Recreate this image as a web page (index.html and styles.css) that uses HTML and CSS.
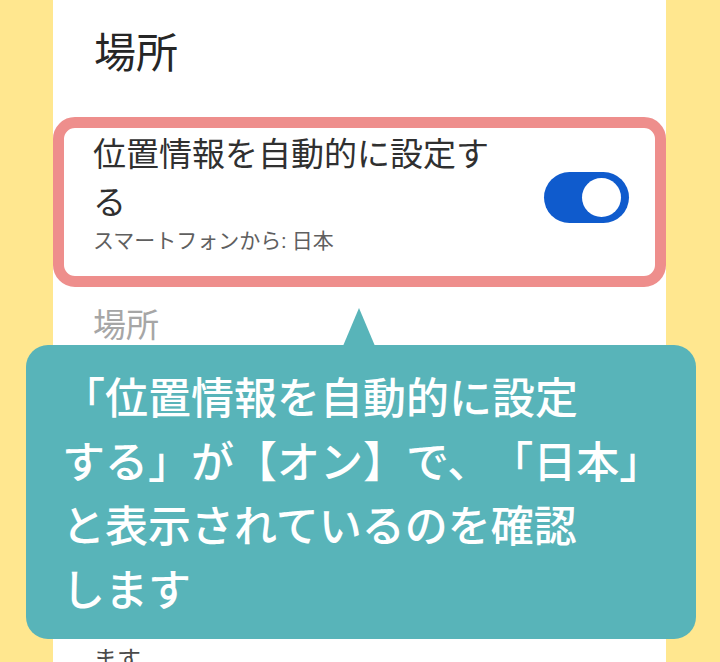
FILE: index.html
```html
<!DOCTYPE html>
<html lang="ja">
<head>
<meta charset="utf-8">
<title>場所</title>
<link rel="stylesheet" href="styles.css">
</head>
<body>
<div class="stage">
  <main class="panel">
    <h1 class="title">場所</h1>
    <section class="setting">
      <div class="setting-text">
        <div class="setting-name">位置情報を自動的に設定する</div>
        <div class="setting-sub">スマートフォンから: 日本</div>
      </div>
      <div class="toggle"><span class="knob"></span></div>
    </section>
    <div class="label">場所</div>
    <p class="note">ます</p>
  </main>
  <div class="tip">「位置情報を自動的に設定<br>する」が【オン】で、「日本」<br>と表示されているのを確認<br>します</div>
</div>
</body>
</html>
```
FILE: styles.css
```css
html, body {
  margin: 0;
  padding: 0;
}
body {
  background: #ffe78f;
  font-family: Roboto, "Noto Sans CJK JP", sans-serif;
  overflow: hidden;
}
.stage {
  position: relative;
  width: 720px;
  height: 662px;
  overflow: hidden;
}
.panel {
  width: 613px;
  height: 662px;
  margin-left: 53px;
  background: #ffffff;
  overflow: hidden;
}
.title {
  margin: 0;
  padding: 25px 41px 0;
  font-size: 42px;
  line-height: 57px;
  font-weight: 400;
  color: #262626;
}
.setting {
  margin-top: 35px;
  border: 11px solid #ee8e8c;
  border-radius: 22px;
  padding: 3px 26px 21px 29px;
  display: flex;
  align-items: center;
  gap: 30px;
}
.setting-text {
  flex: 1;
}
.setting-name {
  font-size: 33px;
  line-height: 48px;
  color: #303030;
}
.setting-sub {
  font-size: 21px;
  line-height: 28px;
  color: #5f5f5f;
}
.toggle {
  width: 85px;
  height: 51px;
  margin-top: 9px;
  border-radius: 26px;
  background: #0f5bcd;
  display: flex;
  align-items: center;
  justify-content: flex-end;
  padding-right: 8px;
  box-sizing: border-box;
  flex: none;
}
.knob {
  width: 39px;
  height: 39px;
  border-radius: 50%;
  background: #ffffff;
}
.label {
  margin-top: 15px;
  padding: 0 40px;
  font-size: 33px;
  line-height: 48px;
  color: #a6a6a6;
}
.note {
  margin: 292px 0 0;
  padding: 0 40px;
  font-size: 24px;
  line-height: 36px;
  color: #4a4a4a;
}
.tip {
  position: absolute;
  left: 26px;
  top: 345px;
  width: 670px;
  height: 294px;
  box-sizing: border-box;
  padding: 18px 20px 0 36px;
  background: #58b4b9;
  border-radius: 22px;
  color: #ffffff;
  font-family: "Noto Sans CJK JP", sans-serif;
  font-size: 43px;
  line-height: 64px;
  font-weight: 500;
  white-space: nowrap;
  text-spacing-trim: space-all;
}
.tip::before {
  content: "";
  position: absolute;
  left: 317px;
  top: -37px;
  width: 32px;
  height: 38px;
  background: #58b4b9;
  clip-path: polygon(50% 0, 100% 100%, 0 100%);
}
```
